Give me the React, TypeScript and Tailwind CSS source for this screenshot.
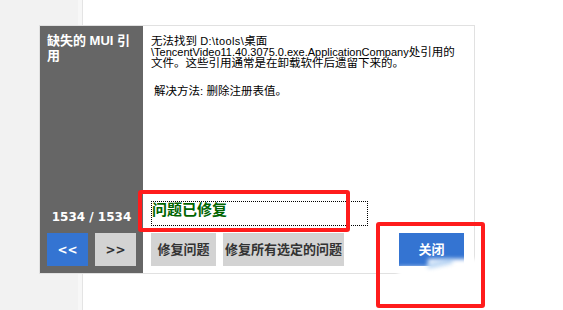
import React from 'react';

const bodyFont = { fontFamily: '"Liberation Sans", "Noto Sans CJK SC", sans-serif' };

const App: React.FC = () => {
  return (
    <div className="relative w-[563px] h-[310px] overflow-hidden flex bg-white">
      {/* Desktop behind the dialog */}
      <div className="w-[78px] h-full bg-[#f2f2f2]" />
      <div className="w-[4px] h-full bg-[#f7f7f7]" />
      <div className="w-px h-full bg-[#e4e4e4]" />
      <div className="flex-1 h-full bg-white" />

      {/* Dialog */}
      <div
        className="absolute left-[39px] top-[25px] w-[436px] h-[249px] border border-[#e1e1e1] bg-white flex"
        style={bodyFont}
      >
        {/* Sidebar */}
        <div className="w-[103px] h-full bg-[#666666] flex flex-col px-[7px] pt-[7px] pb-[7px]">
          <div className="text-white font-bold text-[13px] leading-[15px]">缺失的 MUI 引用</div>
          <div className="flex-1" />
          <div
            className="text-white font-bold text-[12px] leading-[14px] text-center mb-[9px]"
            style={{ fontFamily: '"DejaVu Sans", sans-serif' }}
          >
            1534 / 1534
          </div>
          <div className="flex gap-[7px]">
            <button
              className="w-[41px] h-[33px] bg-[#3474d2] text-white font-bold text-[12px] flex items-center justify-center"
              style={{ fontFamily: '"DejaVu Sans", sans-serif' }}
            >
              &lt;&lt;
            </button>
            <button
              className="w-[41px] h-[33px] bg-[#d3d3d3] text-[#333333] font-bold text-[12px] flex items-center justify-center"
              style={{ fontFamily: '"DejaVu Sans", sans-serif' }}
            >
              &gt;&gt;
            </button>
          </div>
        </div>

        {/* Content */}
        <div className="flex-1 h-full flex flex-col pl-[8px] pr-[10px] pt-[10px] pb-[7px]">
          <div className="text-black text-[11.5px] leading-[11px] whitespace-nowrap">
            <div>
              无法找到 <span className="text-[11px] tracking-[0.4px]">D:\tools\</span>桌面
            </div>
            <div>
              <span className="text-[11px]">\TencentVideo11.40.3075.0.exe.ApplicationCompany</span>处引用的
            </div>
            <div>文件。这些引用通常是在卸载软件后遗留下来的。</div>
            <div className="mt-[17px] pl-[3px]">解决方法: 删除注册表值。</div>
          </div>

          <div className="flex-1" />

          <div className="w-[217px] h-[25px] border border-dotted border-black mb-[7px]">
            <div className="text-[#006400] font-bold text-[15px] leading-[15px]">问题已修复</div>
          </div>

          <div className="flex h-[33px]">
            <button className="w-[65px] h-full bg-[#d3d3d3] text-[#333333] font-bold text-[13px] flex items-center justify-center">
              修复问题
            </button>
            <button className="ml-[7px] w-[121px] h-full bg-[#d3d3d3] text-[#333333] font-bold text-[13px] flex items-center justify-center">
              修复所有选定的问题
            </button>
            <div className="flex-1" />
            <button className="w-[65px] h-full bg-[#3474d2] text-white font-bold text-[13px] flex items-center justify-center">
              关闭
            </button>
          </div>
        </div>
      </div>

      {/* Smeared watermark */}
      <div className="absolute left-[398px] top-[267px] w-[40px] h-[36px] bg-white blur-[2px]" />
      <div className="absolute left-[428px] top-[259px] w-[132px] h-[44px] bg-white blur-[2px]" />
      <div className="absolute left-[427px] top-[261px] w-[26px] h-[5px] bg-[#6aa6e6] opacity-50 blur-[2px] rounded-full -rotate-[12deg]" />

      {/* Red annotations */}
      <div className="absolute left-[138px] top-[190px] w-[212px] h-[42px] border-[4px] border-[#ff1c1c] rounded-[3px]" />
      <div className="absolute left-[376px] top-[222px] w-[109px] h-[86px] border-[4px] border-[#ff1c1c] rounded-[3px]" />
    </div>
  );
};

export default App;
